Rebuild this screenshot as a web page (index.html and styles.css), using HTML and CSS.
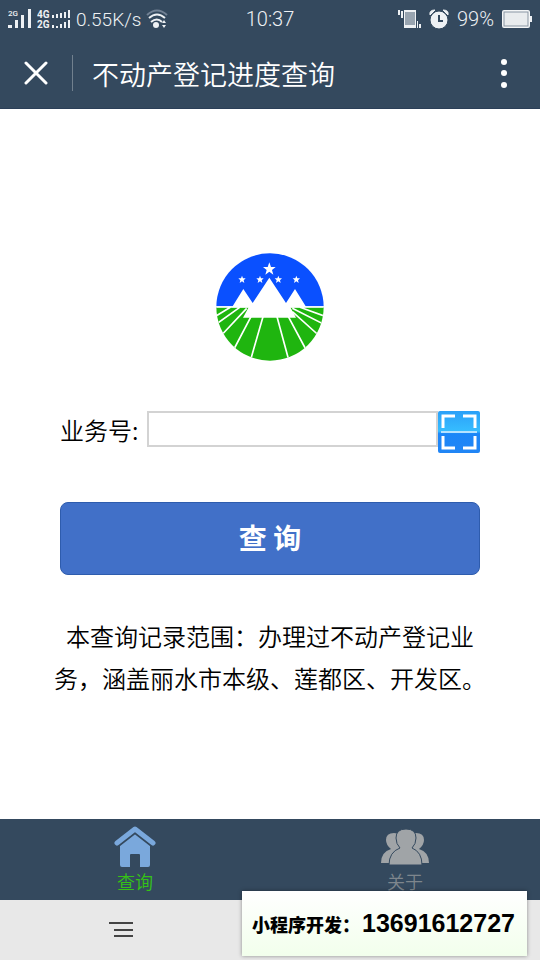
FILE: index.html
```
<!DOCTYPE html>
<html lang="zh-CN">
<head>
  <meta charset="UTF-8">
  <meta name="viewport" content="width=device-width, initial-scale=1">
  <title>不动产登记进度查询</title>
  <link rel="stylesheet" href="styles.css">
</head>
<body>

<div class="status">
  <div class="status-left">
    <svg width="24" height="20" viewBox="0 0 24 20" fill="#eef1f4">
      <text x="0" y="7" class="net">2G</text>
      <path d="M0 16h4v3H0zM7 11h3v8H7zM13 6h3v13h-3zM20 0h3v19h-3z"/>
    </svg>
    <svg width="34" height="20" viewBox="0 0 34 20" fill="#eef1f4">
      <text x="0" y="9" class="net net-bold">4G</text>
      <text x="0" y="19" class="net net-bold">2G</text>
      <path d="M15 6h2v3h-2zM19 5h2v4h-2zM23 4h2v5h-2zM27 3h2v6h-2zM31 1h2v8h-2zM15 16h2v3h-2zM19 17h2v2h-2zM23 15h2v4h-2zM27 13h2v6h-2zM31 11h2v8h-2z"/>
    </svg>
    <span>0.55K/s</span>
    <svg width="22" height="20" viewBox="0 0 22 20" fill="none" stroke="#eef1f4" stroke-width="2">
      <path d="M1 6Q11-3 21 6" stroke="#718194"/>
      <path d="M3 9Q11 2 19 9M5 13Q11 8 16 13"/>
      <circle cx="10" cy="16" r="3" fill="#eef1f4" stroke="none"/>
      <path d="M16 14l2-3 2 3zM16 16l2 3 2-3z" fill="#eef1f4" stroke="none"/>
    </svg>
  </div>
  <div class="time">10:37</div>
  <div class="status-right">
    <svg width="23" height="20" viewBox="0 0 23 20">
      <path d="M6 1h12v18H6z" fill="#eef1f4"/>
      <path d="M7 3h10v13H7z" fill="#98a4b0"/>
      <path d="M0 1h2v5H0zM3 2h2v7H3zM19 12h1v7h-1zM21 15h2v4h-2z" fill="#eef1f4"/>
    </svg>
    <svg width="20" height="20" viewBox="0 0 20 20">
      <path d="M1 6Q0 1 6 1zM19 6Q20 1 14 1z" fill="#eef1f4" stroke="#eef1f4"/>
      <circle cx="10" cy="11" r="9" fill="#eef1f4" stroke="#34495e"/>
      <path d="M10 6v6h4" fill="none" stroke="#34495e" stroke-width="2"/>
    </svg>
    <span class="percent">99%</span>
    <svg width="30" height="18" viewBox="0 0 30 18">
      <rect x="1" y="1" width="26" height="16" rx="1" fill="#e9ecee" stroke="#f4f6f7" stroke-width="2"/>
      <rect x="2" y="2" width="24" height="14" fill="none" stroke="#8996a3"/>
      <path d="M28 6h2v6h-2z" fill="#eef1f4"/>
    </svg>
  </div>
</div>

<header class="header">
  <button class="close" type="button" aria-label="关闭">
    <svg width="24" height="24" viewBox="0 0 24 24" stroke="#fff" stroke-width="3" stroke-linecap="round"><path d="M2 2l20 20M22 2L2 22"/></svg>
  </button>
  <h1>不动产登记进度查询</h1>
  <button class="more" type="button" aria-label="更多">
    <svg width="6" height="30" viewBox="0 0 6 30" fill="#fff"><circle cx="3" cy="4" r="3"/><circle cx="3" cy="15" r="3"/><circle cx="3" cy="27" r="3"/></svg>
  </button>
</header>

<main>
  <svg class="logo" width="108" height="108" viewBox="33 24 324 324">
    <defs>
      <clipPath id="disc"><circle cx="195" cy="186" r="161"/></clipPath>
      <path id="star" d="M0-20L5-6H19L8 3L12 17L0 8L-12 17L-8 3L-19-6H-5z"/>
      <path id="star-small" d="M0-12L3-4H11L5 2L7 10L0 5L-7 10L-5 2L-11-4H-3z"/>
    </defs>
    <g clip-path="url(#disc)">
      <path fill="#0a50ff" d="M33 24h324v160H33z"/>
      <path fill="#1fb50f" d="M33 187h324v161H33z"/>
      <path fill="none" stroke="#fff" stroke-width="5" d="M33 186H357M76 187L33 213M104 187L33 238M125 190L50 270M138 215L87 312M174 215L137 344M216 215L251 344M250 215L302 312M262 200L340 270M262 190L357 238M285 187L357 213"/>
    </g>
    <g fill="#fff">
      <path d="M81 187L115 132L143 174L193 98L243 174L270 132L304 187H256L273 218H114L131 187z"/>
      <use href="#star" x="193" y="72"/>
      <use href="#star-small" x="111" y="104"/>
      <use href="#star-small" x="165" y="104"/>
      <use href="#star-small" x="220" y="104"/>
      <use href="#star-small" x="274" y="104"/>
    </g>
  </svg>

  <form class="search">
    <div class="field">
      <label for="bizNo">业务号:</label>
      <input id="bizNo" name="bizNo" type="text">
      <button class="scan" type="button" aria-label="扫一扫">
        <svg width="42" height="42" viewBox="0 0 42 42" fill="none" stroke="#fff" stroke-width="3">
          <path d="M5 17V5h12M25 5h12v12M5 25v12h12M25 37h12V25"/>
          <path d="M3 21h36" stroke="#b5e2ff" stroke-width="2"/>
        </svg>
      </button>
    </div>
    <button class="submit" type="button">查 询</button>
  </form>

  <p class="note">本查询记录范围：办理过不动产登记业务，涵盖丽水市本级、莲都区、开发区。</p>
</main>

<nav class="tabs">
  <a class="tab active" href="#query">
    <svg width="42" height="42" viewBox="0 0 42 42" fill="#7aa8dc">
      <path d="M6 19L21 6L36 19V39q0 2-2 2H26V29q0-1-1-1H17q-1 0-1 1V41H8q-2 0-2-2z"/>
      <path d="M3 18L21 4L39 18" fill="none" stroke="#34495e" stroke-width="7"/>
      <path d="M3 17L21 3L39 17" fill="none" stroke="#7aa8dc" stroke-width="5" stroke-linecap="round" stroke-linejoin="round"/>
    </svg>
    查询
  </a>
  <a class="tab" href="#about">
    <svg width="48" height="42" viewBox="0 0 48 42" fill="#a0a4a7">
      <path d="M0 37Q0 26 10 23Q5 19 5 14Q5 7 13 7Q20 7 20 15V37z"/>
      <path d="M48 37Q48 26 38 23Q43 19 43 14Q43 7 35 7Q28 7 28 15V37z"/>
      <path d="M8 39Q8 26 19 22Q15 18 15 12Q15 3 25 3Q35 3 35 12Q35 18 31 22Q41 26 41 39z" stroke="#34495e"/>
    </svg>
    关于
  </a>
</nav>

<footer class="system">
  <button class="menu" type="button" aria-label="菜单">
    <svg width="26" height="18" viewBox="0 0 26 18" stroke="#444" stroke-width="2"><path d="M1 2h24M6 9h19M6 15h19"/></svg>
  </button>
  <div class="contact">小程序开发：<span class="phone">13691612727</span></div>
</footer>

</body>
</html>
```

FILE: styles.css
```
* {
  box-sizing: border-box;
}
body {
  margin: 0;
  min-height: 100vh;
  display: flex;
  flex-direction: column;
  background: #fff;
  color: #000;
  font-family: "Noto Sans CJK SC", sans-serif;
  font-size: 24px;
  font-weight: 350;
}
button {
  padding: 0;
  border: 0;
  background: none;
  font-family: inherit;
  cursor: pointer;
}
svg {
  display: block;
  flex: none;
}
.status {
  display: grid;
  grid-template-columns: 1fr auto 1fr;
  align-items: center;
  height: 38px;
  padding: 0 8px;
  background: #34495e;
  color: #eef1f4;
  font-family: Roboto, sans-serif;
  font-size: 19px;
}
.status-left,
.status-right {
  display: flex;
  align-items: center;
  gap: 5px;
}
.status-right {
  justify-content: flex-end;
  gap: 8px;
}
.time,
.percent {
  font-size: 20px;
}
.net {
  font-size: 8px;
  font-weight: 500;
}
.net-bold {
  font-size: 10px;
  font-weight: 700;
}
.header {
  display: flex;
  align-items: center;
  height: 71px;
  padding: 0 33px 0 24px;
  background: #34495e;
  border-bottom: 1px solid #2b3f58;
  color: #fff;
}
.close {
  height: 36px;
  padding-right: 24px;
  border-right: 1px solid #71808e;
}
.header h1 {
  flex: 1;
  margin: 0 0 0 19px;
  font-size: 27px;
  font-weight: 350;
}
main {
  flex: 1;
  padding: 144px 54px 0;
}
.logo {
  margin: 0 auto;
}
.search {
  margin: 50px 6px 0;
}
.field {
  display: flex;
  align-items: flex-start;
}
.field label {
  flex: none;
  width: 87px;
  line-height: 38px;
}
.field input {
  flex: 1;
  min-width: 0;
  height: 36px;
  padding: 0 8px;
  border: 2px solid #d3d3d3;
  font-size: 20px;
}
.scan {
  border-radius: 2px;
  background: linear-gradient(#2ba0f8, #36bdff 48%, #1b86f8 54%, #2185f5);
}
.submit {
  display: block;
  width: 100%;
  height: 73px;
  margin-top: 49px;
  padding-bottom: 4px;
  border: 1px solid #2e5cad;
  border-radius: 8px;
  background: #4170c8;
  color: #fff;
  font-size: 28px;
  font-weight: 700;
}
.note {
  margin: 40px 0 0;
  line-height: 42px;
  text-align: center;
}
.tabs {
  display: flex;
  height: 81px;
  background: #34495e;
}
.tab {
  flex: 1;
  display: flex;
  flex-direction: column;
  align-items: center;
  padding-top: 7px;
  color: #7e868d;
  font-size: 18px;
  line-height: 26px;
  text-decoration: none;
}
.tab.active {
  color: #35c315;
}
.system {
  position: relative;
  display: flex;
  align-items: center;
  height: 60px;
  padding-left: 108px;
  background: #e8e8e8;
}
.contact {
  position: absolute;
  right: 13px;
  bottom: 4px;
  display: flex;
  align-items: center;
  gap: 2px;
  height: 65px;
  padding: 0 12px 0 10px;
  background: linear-gradient(#fff, #f2ffec);
  box-shadow: 0 0 4px rgba(0, 0, 0, 0.4);
  color: #000;
  font-size: 18px;
  font-weight: 900;
}
.phone {
  font-family: "Liberation Sans", sans-serif;
  font-size: 25px;
  font-weight: 700;
}
```
